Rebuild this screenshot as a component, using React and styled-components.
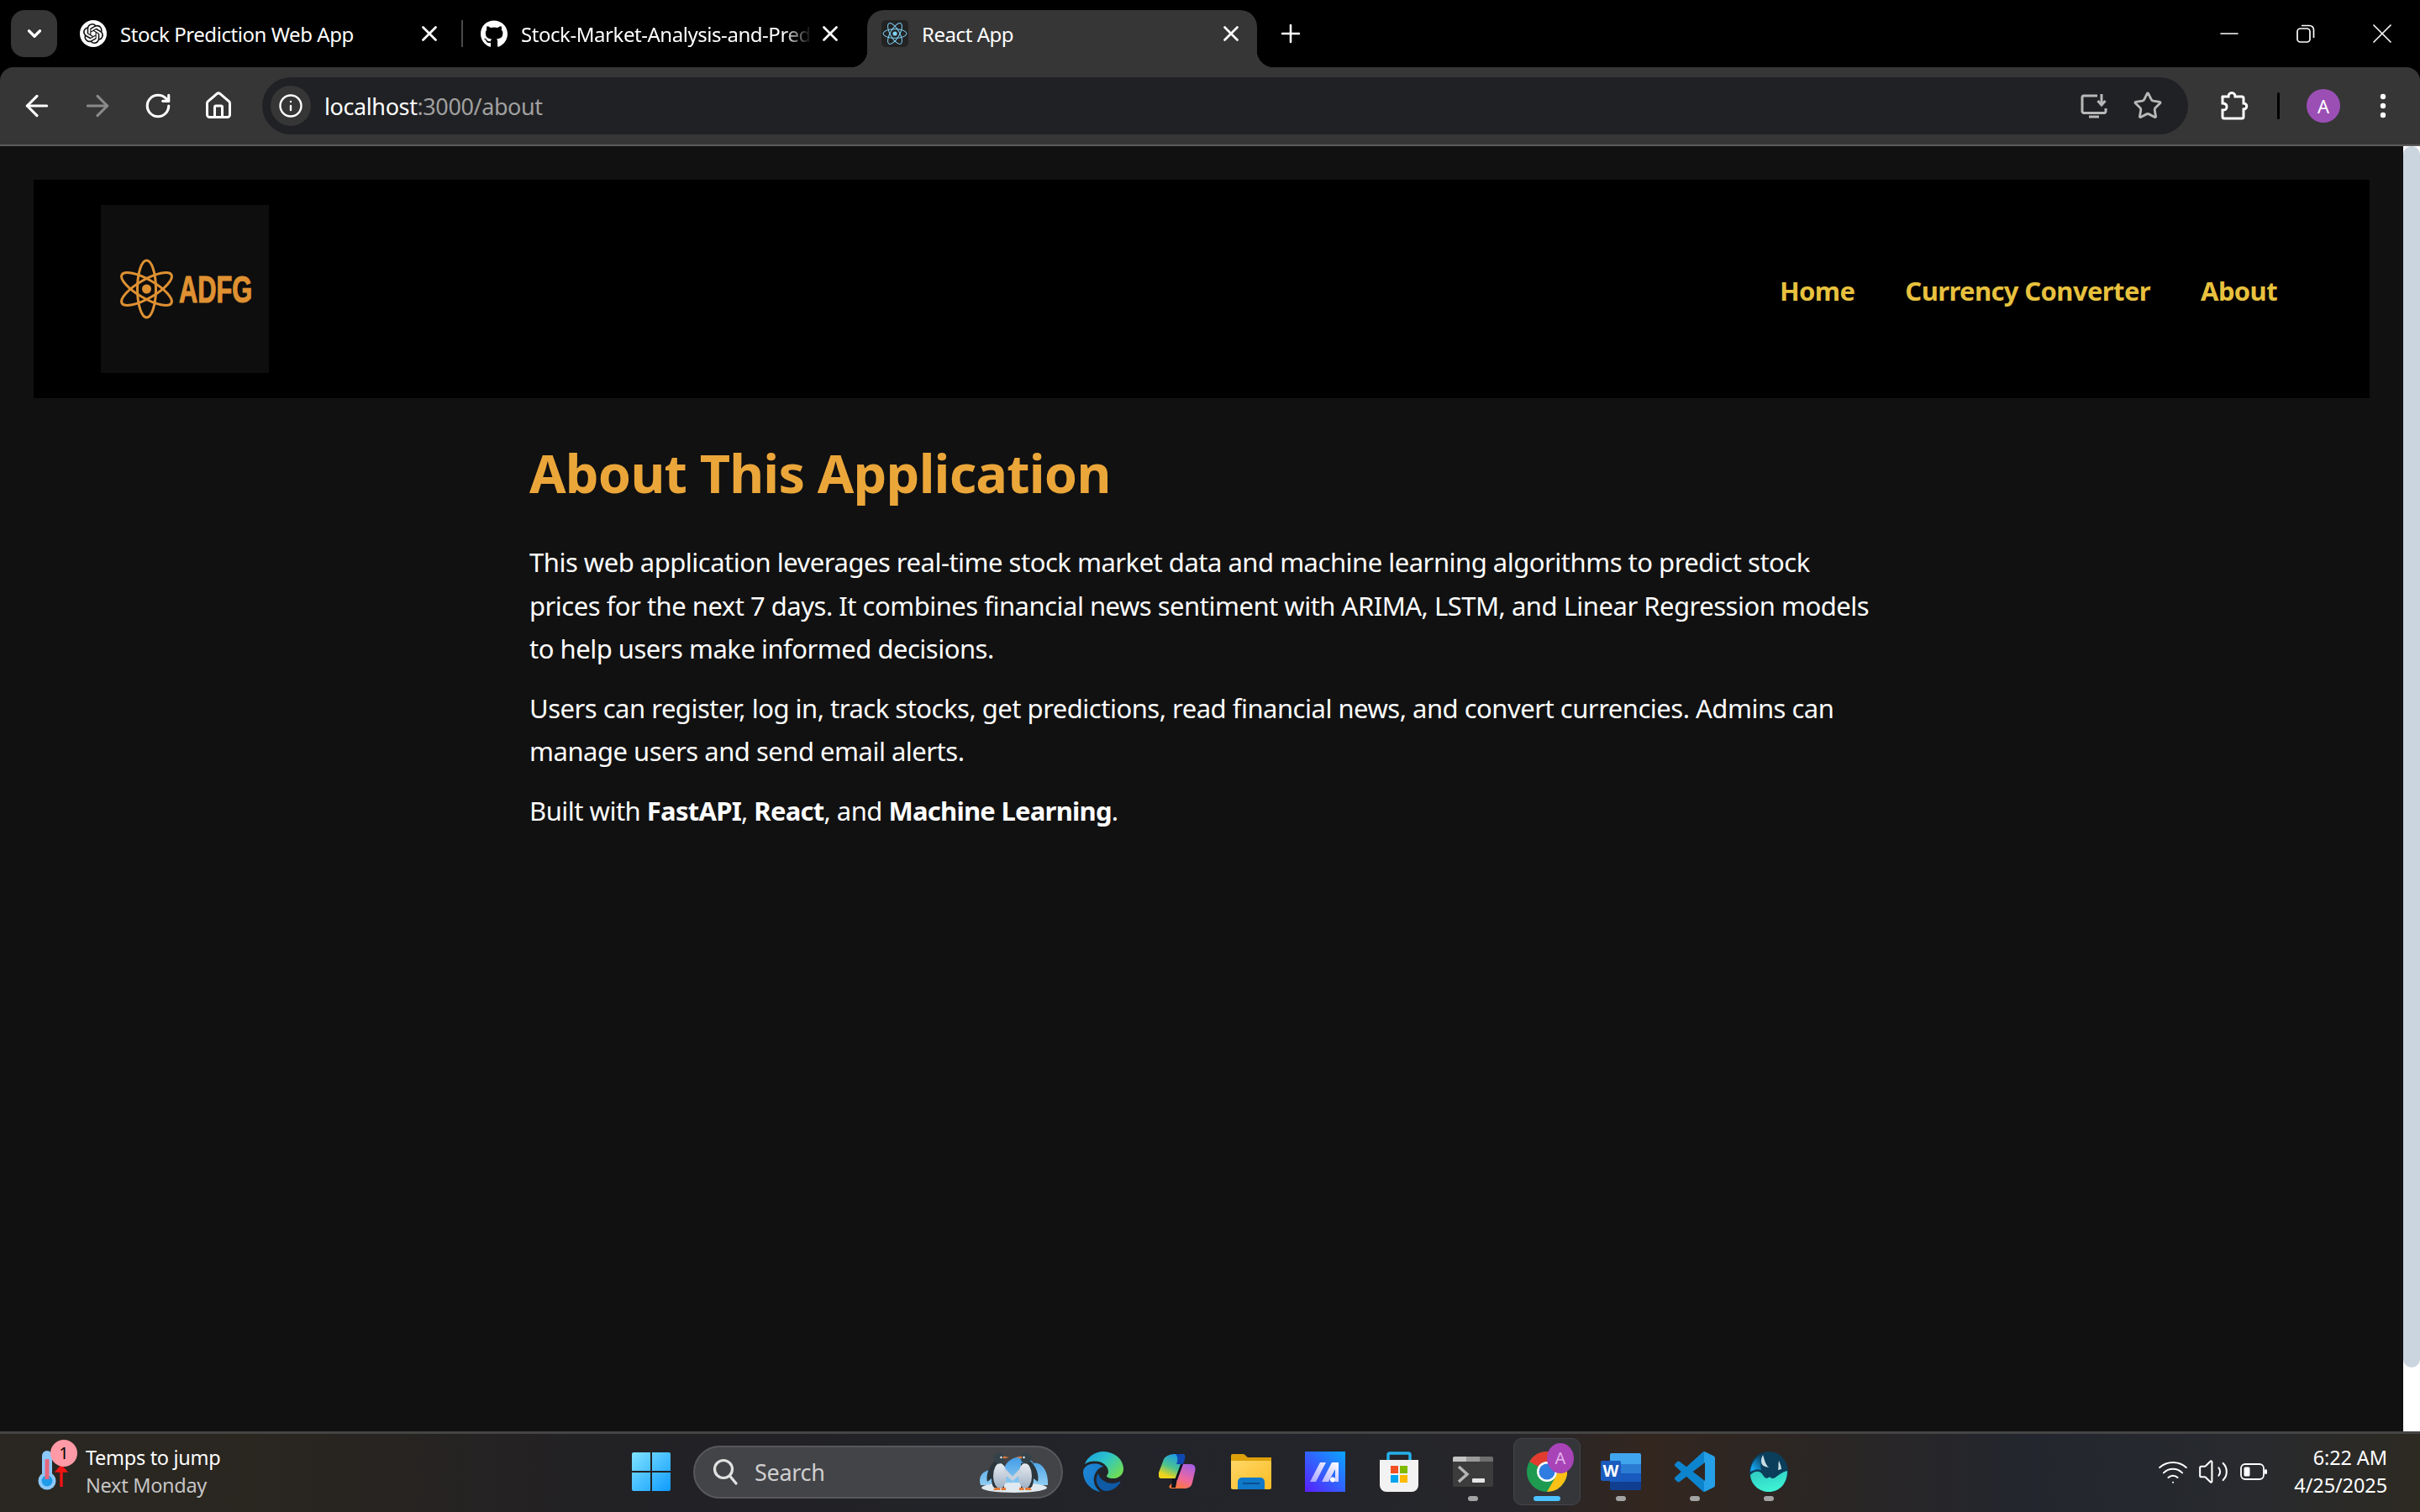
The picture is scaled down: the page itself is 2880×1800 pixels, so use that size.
import React from 'react';
import styled, { createGlobalStyle } from 'styled-components';
import {
  ArrowLeft,
  ArrowRight,
  ChevronDown,
  House,
  Info,
  Minus,
  Plus,
  RotateCw,
  Star,
  Volume2,
  Wifi,
  X,
} from 'lucide-react';
import { FaGithub } from 'react-icons/fa';
import { SiOpenai } from 'react-icons/si';

const uiFont = '"Noto Sans", "Open Sans", sans-serif';

const GlobalStyle = createGlobalStyle`
  html, body {
    margin: 0;
    width: 2880px;
    height: 1800px;
    overflow: hidden;
    background: #000;
  }
  * { box-sizing: border-box; }
`;

const Screen = styled.div`
  width: 2880px;
  height: 1800px;
  display: flex;
  flex-direction: column;
  font-family: ${uiFont};
  color: #fff;
`;

/* ---- tab strip ---- */

const TabStrip = styled.div`
  height: 80px;
  flex: none;
  display: flex;
  align-items: flex-start;
  padding: 12px 0 0 13px;
  background: #000;
`;

const TabListButton = styled.div`
  width: 55px;
  height: 56px;
  border-radius: 16px;
  background: #363636;
  display: flex;
  align-items: center;
  justify-content: center;
`;

const Tabs = styled.div`
  display: flex;
  gap: 13px;
  margin-left: 10px;
`;

const Tab = styled.div`
  position: relative;
  width: 464px;
  height: 68px;
  display: flex;
  align-items: flex-start;
  padding: 12px 15px 0 17px;
  border-radius: 20px 20px 0 0;
  background: ${(p) => (p.$active ? '#363636' : 'transparent')};

  ${(p) =>
    p.$active &&
    `
    &::before, &::after {
      content: '';
      position: absolute;
      bottom: 0;
      width: 20px;
      height: 20px;
    }
    &::before {
      left: -20px;
      background: radial-gradient(circle at 0 0, transparent 20px, #363636 20.5px);
    }
    &::after {
      right: -20px;
      background: radial-gradient(circle at 100% 0, transparent 20px, #363636 20.5px);
    }
  `}

  ${(p) =>
    p.$separator &&
    `
    &::after {
      content: '';
      position: absolute;
      right: -9px;
      top: 12px;
      width: 2px;
      height: 32px;
      background: #4a4a4a;
    }
  `}
`;

const Favicon = styled.div`
  width: 32px;
  height: 32px;
  flex: none;
  display: flex;
  align-items: center;
  justify-content: center;
  border-radius: ${(p) => (p.$round ? '50%' : '5px')};
  background: ${(p) => p.$bg || 'transparent'};
  color: ${(p) => p.$color || '#fff'};
`;

const TabTitle = styled.span`
  flex: 1;
  min-width: 0;
  margin-left: 16px;
  font-size: 24px;
  line-height: 33px;
  letter-spacing: -0.45px;
  white-space: nowrap;
  overflow: hidden;
  -webkit-mask-image: ${(p) =>
    p.$fade ? 'linear-gradient(90deg, #000 90%, transparent 100%)' : 'none'};
`;

const TabClose = styled.div`
  flex: none;
  width: 32px;
  height: 32px;
  margin-left: 6px;
  display: flex;
  align-items: center;
  justify-content: center;
`;

const NewTab = styled.div`
  width: 40px;
  height: 56px;
  margin-left: 20px;
  display: flex;
  align-items: center;
  justify-content: center;
`;

const WindowControls = styled.div`
  display: flex;
  margin: -12px 0 0 auto;
`;

const WindowButton = styled.div`
  width: 91px;
  height: 80px;
  display: flex;
  align-items: center;
  justify-content: center;
`;

/* ---- toolbar ---- */

const Toolbar = styled.div`
  height: 94px;
  flex: none;
  display: flex;
  align-items: center;
  padding-left: 8px;
  border-radius: 16px 16px 0 0;
  border-bottom: 2px solid #5c5c5c;
  background: #363636;
`;

const NavButton = styled.div`
  width: 72px;
  height: 68px;
  flex: none;
  display: flex;
  align-items: center;
  justify-content: center;
  color: ${(p) => (p.$dim ? '#8a8a8a' : '#fff')};
`;

const Omnibox = styled.div`
  flex: 1;
  height: 68px;
  margin-left: 16px;
  display: flex;
  align-items: center;
  padding: 0 30px 0 10px;
  border-radius: 34px;
  background: #202124;
`;

const InfoChip = styled.div`
  width: 48px;
  height: 48px;
  flex: none;
  display: flex;
  align-items: center;
  justify-content: center;
  border-radius: 50%;
  background: #363636;
`;

const Url = styled.div`
  flex: 1;
  margin-left: 16px;
  font-size: 27px;
  letter-spacing: -0.4px;
  color: #a0a0a0;

  b {
    font-weight: 400;
    color: #fff;
  }
`;

const OmniIcons = styled.div`
  display: flex;
  align-items: center;
  gap: 30px;
  color: #b8b8b8;
`;

const ToolRight = styled.div`
  width: 276px;
  flex: none;
  display: flex;
  align-items: center;
  padding-left: 38px;
`;

const ToolDivider = styled.div`
  width: 3px;
  height: 32px;
  margin: 0 32px 0 34px;
  border-radius: 2px;
  background: #000;
`;

const Avatar = styled.div`
  width: 40px;
  height: 40px;
  margin-right: 43px;
  border-radius: 50%;
  background: #9b4fb5;
  font-size: 22px;
  line-height: 40px;
  text-align: center;
`;

/* ---- page ---- */

const Viewport = styled.div`
  flex: 1;
  min-height: 0;
  display: flex;
`;

const Page = styled.main`
  flex: 1;
  padding: 40px 40px 0;
  background: #111;
`;

const Navbar = styled.nav`
  height: 260px;
  display: flex;
  align-items: center;
  justify-content: space-between;
  padding: 0 110px 0 80px;
  background: #000;
`;

const LogoBox = styled.div`
  width: 200px;
  height: 200px;
  background: #0e0e0e;
`;

const NavLinks = styled.div`
  display: flex;
  gap: 60px;
  margin-top: 4px;
`;

const NavLink = styled.a`
  font-size: 31px;
  font-weight: 700;
  letter-spacing: -0.62px;
  color: #e8c13e;
`;

const Article = styled.article`
  width: 1600px;
  margin: 0 auto;
  padding-top: 47px;
`;

const Heading = styled.h1`
  margin: 0 0 39px;
  font-size: 63px;
  line-height: 84px;
  font-weight: 700;
  letter-spacing: -0.8px;
  color: #eba63a;
`;

const Paragraph = styled.p`
  margin: 0 0 19px;
  font-size: 31px;
  line-height: 51.5px;
  letter-spacing: -0.5px;
  color: #fff;

  strong {
    font-weight: 700;
    letter-spacing: -0.75px;
  }
`;

const Scrollbar = styled.div`
  width: 20px;
  flex: none;
  background: #fff;
`;

const ScrollThumb = styled.div`
  height: 1454px;
  border-radius: 10px;
  background: #cbd5e0;
`;

/* ---- taskbar ---- */

const Taskbar = styled.footer`
  height: 96px;
  flex: none;
  display: flex;
  align-items: center;
  box-shadow: inset 0 3px 0 #454545;
  background: linear-gradient(
    90deg,
    #2a2722 0,
    #2a2620 300px,
    #222124 720px,
    #22242a 1400px,
    #26262a 1800px,
    #33261f 1960px,
    #2b2624 2150px,
    #23262e 2420px,
    #282a2e 2680px,
    #2d2a22 2880px
  );
`;

const Widget = styled.div`
  width: 752px;
  flex: none;
  display: flex;
  align-items: center;
  padding-left: 44px;
`;

const WeatherIcon = styled.div`
  position: relative;
  width: 58px;
  height: 50px;
  flex: none;
`;

const WeatherBadge = styled.span`
  position: absolute;
  left: 16px;
  top: -13px;
  width: 32px;
  height: 32px;
  border-radius: 50%;
  background: #ff9aa6;
  color: #000;
  font-size: 20px;
  line-height: 32px;
  text-align: center;
`;

const WidgetText = styled.div`
  font-size: 23.5px;
  line-height: 33px;
  letter-spacing: -0.3px;
`;

const Muted = styled.div`
  color: #c4c4c4;
`;

const SearchBox = styled.div`
  width: 440px;
  height: 63px;
  margin-left: 27px;
  display: flex;
  align-items: center;
  padding: 0 13px 0 21px;
  border: 2px solid #57585b;
  border-radius: 32px;
  background: #434448;
`;

const SearchLabel = styled.span`
  flex: 1;
  margin-left: 20px;
  font-size: 27px;
  letter-spacing: -0.3px;
  color: #cfcfcf;
`;

const Dock = styled.div`
  display: flex;
  margin-left: 4px;
`;

const DockCell = styled.div`
  position: relative;
  width: 88px;
  height: 80px;
  display: flex;
  align-items: center;
  justify-content: center;

  ${(p) =>
    p.$active &&
    `
    &::before {
      content: '';
      position: absolute;
      left: 4px;
      right: 4px;
      top: 0;
      bottom: 0;
      border-radius: 10px;
      border: 1px solid #44464b;
      background: #35363a;
    }
  `}

  > svg {
    position: relative;
  }
`;

const RunningDot = styled.span`
  position: absolute;
  left: 50%;
  bottom: 5px;
  width: ${(p) => (p.$active ? '32px' : '12px')};
  height: 6px;
  border-radius: 3px;
  transform: translateX(-50%);
  background: ${(p) => (p.$active ? '#4cc2ff' : '#a3a3a3')};
`;

const ChromeBadge = styled.span`
  position: absolute;
  left: 44px;
  top: 6px;
  width: 32px;
  height: 36px;
  border-radius: 50%;
  background: #a943b8;
  color: #e3b3ea;
  font-size: 20px;
  line-height: 36px;
  text-align: center;
`;

const Tray = styled.div`
  display: flex;
  align-items: center;
  gap: 10px;
  margin-left: auto;
`;

const Clock = styled.div`
  margin: 0 39px 0 19px;
  font-size: 23.5px;
  line-height: 33px;
  letter-spacing: -0.1px;
  text-align: right;
`;

/* ---- drawn icons ---- */

const RestoreIcon = () => (
  <svg width="24" height="24" viewBox="0 0 24 24" fill="none" stroke="#fff" strokeWidth="1.7">
    <rect x="2" y="6" width="15" height="16" rx="3.5" />
    <path d="M7 2.5h9.5a5 5 0 0 1 5 5V17" />
  </svg>
);

const InstallIcon = () => (
  <svg width="32" height="30" viewBox="0 0 32 30" fill="none" stroke="currentColor" strokeWidth="3">
    <path d="M20 3H3.5a2 2 0 0 0-1.5 2v17a2 2 0 0 0 1.5 1.5h25A2 2 0 0 0 30 22v-4" />
    <path d="M10 28h12" />
    <path d="M25 1v12M20.5 9l4.5 5 4.5-5" />
  </svg>
);

const PuzzleIcon = () => (
  <svg width="34" height="34" viewBox="0 0 34 34" fill="none" stroke="#fff" strokeWidth="3">
    <path d="M3 6h7c0-6 8-6 8 0h8a2 2 0 0 1 2 2v6c5 0 5 7 0 7v9a2 2 0 0 1-2 2H5a2 2 0 0 1-2-2v-8c4 0 5-1 5-4s-2-4-5-4V8a2 2 0 0 1 0-2z" />
  </svg>
);

const MoreIcon = () => (
  <svg width="16" height="30" viewBox="0 0 16 30" fill="#fff">
    <circle cx="8" cy="4" r="3.2" />
    <circle cx="8" cy="15" r="3.2" />
    <circle cx="8" cy="26" r="3.2" />
  </svg>
);

const ReactIcon = () => (
  <svg width="30" height="30" viewBox="0 0 30 30" fill="none" stroke="#7fd3f7" strokeWidth="1">
    <circle cx="15" cy="15" r="2.6" fill="#7fd3f7" stroke="none" />
    <ellipse cx="15" cy="15" rx="14" ry="5.4" />
    <ellipse cx="15" cy="15" rx="14" ry="5.4" transform="rotate(60 15 15)" />
    <ellipse cx="15" cy="15" rx="14" ry="5.4" transform="rotate(120 15 15)" />
  </svg>
);

const LogoMark = () => (
  <svg width="200" height="200" viewBox="0 0 200 200" fill="none" stroke="#df9132" strokeWidth="3">
    <ellipse cx="54.5" cy="100" rx="11" ry="34" />
    <ellipse cx="54.5" cy="100" rx="11" ry="34" transform="rotate(60 54.5 100)" />
    <ellipse cx="54.5" cy="100" rx="11" ry="34" transform="rotate(120 54.5 100)" />
    <circle cx="54.5" cy="100" r="5.5" fill="#df9132" stroke="none" />
    <text
      transform="translate(93 115.500) scale(0.7 1)"
      fill="#df9132"
      strokeWidth="1.2"
      fontFamily="'Liberation Sans', sans-serif"
      fontWeight="700"
      fontSize="44"
    >
      ADFG
    </text>
  </svg>
);

const Thermometer = () => (
  <svg width="40" height="50" viewBox="0 0 40 50">
    <rect x="6" y="0" width="12" height="36" rx="6" fill="#8cc8fa" />
    <circle cx="12" cy="36" r="10.5" fill="#8cc8fa" />
    <circle cx="12" cy="36" r="6.5" fill="#1f9be8" />
    <rect x="9.5" y="10" width="5" height="24" fill="#e8677c" />
    <path d="M29 43V24M24.5 24h9L29 19z" stroke="#f01414" strokeWidth="3.4" fill="#f01414" />
  </svg>
);

const SearchGlass = () => (
  <svg width="30" height="32" viewBox="0 0 30 32" fill="none" stroke="#e2e2e2" strokeWidth="3.2">
    <circle cx="13" cy="13" r="10.5" />
    <path d="M20.5 21l7.5 9" strokeLinecap="round" />
  </svg>
);

const Penguin = ({ x, flip }) => (
  <g transform={`translate(${x} 0) ${flip ? 'scale(-1 1)' : ''}`}>
    <path d="M-6 14C-12 20-16 30-14 38l5-4c0 5 1 9 3 11h12V16z" fill="#2b353c" />
    <ellipse cx="1" cy="31" rx="8" ry="15" fill="url(#penguinBelly)" />
    <circle cx="0" cy="10" r="6.5" fill="#34424a" />
    <circle cx="2.500" cy="9" r="1.300" fill="#dfe6ea" />
    <path d="M5 7.500l7 1.500-7 1.500z" fill="#e07a3a" />
    <path d="M7 22l11 12-2 3-11-9z" fill="#c9d2dc" />
    <path d="M-5 45h6v3h-8zM3 45h5v3h-6z" fill="#e07a3a" />
  </g>
);

const PenguinsDoodle = () => (
  <svg width="86" height="52" viewBox="0 0 86 52">
    <defs>
      <linearGradient id="penguinBelly" x1="0" y1="0" x2="0" y2="1">
        <stop offset="0" stopColor="#e8edf2" />
        <stop offset="1" stopColor="#9fb0c4" />
      </linearGradient>
      <linearGradient id="penguinCloud" x1="0" y1="0" x2="0" y2="1">
        <stop offset="0" stopColor="#3f9be6" />
        <stop offset="1" stopColor="#8fcdf2" />
      </linearGradient>
    </defs>
    <path d="M3 42C-1 30 8 24 16 24c2-8 10-12 16-4 4-12 26-18 34-4 10-2 18 10 17 26z" fill="url(#penguinCloud)" />
    <ellipse cx="43" cy="45" rx="39" ry="6" fill="#dfe9ef" />
    <Penguin x={25} />
    <Penguin x={57} flip />
  </svg>
);

const WindowsLogo = () => (
  <svg width="46" height="46" viewBox="0 0 46 46">
    <defs>
      <linearGradient id="winA" x1="0" y1="0" x2="1" y2="1">
        <stop offset="0" stopColor="#7fe3ff" />
        <stop offset="1" stopColor="#0f9bff" />
      </linearGradient>
    </defs>
    <path fill="url(#winA)" d="M0 2a2 2 0 0 1 2-2h20v22H0zM24 0h20a2 2 0 0 1 2 2v20H24zM0 24h22v22H2a2 2 0 0 1-2-2zM24 24h22v20a2 2 0 0 1-2 2H24z" />
  </svg>
);

const EdgeIcon = () => (
  <svg width="48" height="48" viewBox="0 0 24 24">
    <defs>
      <linearGradient id="edgeTop" x1="0" y1="0" x2="1" y2="0.7">
        <stop offset="0" stopColor="#1b9de2" />
        <stop offset="0.5" stopColor="#2cc4c9" />
        <stop offset="1" stopColor="#6fdc54" />
      </linearGradient>
      <linearGradient id="edgeLeft" x1="0" y1="0" x2="1" y2="1">
        <stop offset="0" stopColor="#1f86d6" />
        <stop offset="1" stopColor="#1276c4" />
      </linearGradient>
    </defs>
    <path fill="url(#edgeTop)" d="M11.96.06q1.7 0 3.33.39 1.63.38 3.07 1.15 1.43.77 2.62 1.93 1.18 1.16 1.98 2.7.49.94.76 1.96.28 1 .28 2.08 0 .89-.23 1.7-.24.8-.69 1.48-.45.68-1.1 1.22-.64.53-1.45.88-.54.24-1.11.36-.58.13-1.16.13-.42 0-.97-.03-.54-.03-1.1-.12-.55-.1-1.05-.28-.5-.19-.84-.5-.12-.09-.23-.24-.1-.16-.1-.33 0-.15.16-.35.16-.2.35-.5.2-.28.36-.68.16-.4.16-.95 0-1.06-.4-1.96-.4-.91-1.06-1.64-.66-.74-1.52-1.28-.86-.55-1.79-.89-.84-.3-1.72-.44-.87-.14-1.76-.14-1.55 0-3.06.45T.94 7.55q.71-1.74 1.81-3.13 1.1-1.38 2.52-2.35Q6.68 1.1 8.37.58q1.7-.52 3.58-.52Z" />
    <path fill="url(#edgeLeft)" d="M6.36 16.59q0 1.1.27 2.15.27 1.06.78 2.03.51.96 1.24 1.77.74.82 1.66 1.4-1.47-.2-2.8-.74-1.33-.55-2.48-1.37-1.15-.83-2.08-1.9-.92-1.07-1.58-2.33T.36 14.94Q0 13.54 0 12.06q0-.81.32-1.49.31-.68.83-1.23.53-.55 1.2-.96.66-.4 1.35-.66.74-.27 1.5-.39.78-.12 1.55-.12.7 0 1.42.1.72.12 1.4.35.68.23 1.32.57.63.35 1.16.83-.35 0-.7.07-.33.07-.65.23v-.02q-.63.28-1.2.74-.57.46-1.05 1.04-.48.58-.87 1.26-.38.67-.65 1.39-.27.71-.42 1.44-.15.72-.15 1.38z" />
    <path fill="#0f5aa6" d="M21.86 17.86q.14 0 .25.12.1.13.1.25t-.11.33l-.32.46-.43.53-.44.5q-.21.25-.38.42l-.22.23q-.58.53-1.34 1.04-.76.51-1.6.91-.86.4-1.74.64t-1.67.24q-.9 0-1.69-.28-.8-.28-1.48-.78-.68-.5-1.22-1.17-.53-.66-.92-1.44-.38-.77-.58-1.6-.2-.83-.2-1.67 0-1 .32-1.96.33-.97.87-1.8.14.95.55 1.77.41.82 1.02 1.5.6.68 1.38 1.21.78.54 1.64.9.86.36 1.77.56.92.2 1.8.2 1.12 0 2.18-.24 1.06-.23 2.06-.72l.2-.1.2-.05z" />
  </svg>
);

const CopilotIcon = () => (
  <svg width="44" height="42" viewBox="0 0 44 42">
    <defs>
      <linearGradient id="copA" x1="0.7" y1="0" x2="0.25" y2="1">
        <stop offset="0" stopColor="#1a9af0" />
        <stop offset="0.5" stopColor="#4cc38e" />
        <stop offset="0.85" stopColor="#eed41c" />
      </linearGradient>
      <linearGradient id="copB" x1="0.7" y1="0" x2="0.25" y2="1">
        <stop offset="0" stopColor="#a95fe0" />
        <stop offset="0.55" stopColor="#ee689e" />
        <stop offset="1" stopColor="#ff7a30" />
      </linearGradient>
    </defs>
    <path fill="url(#copB)" d="M27 12h11c4 0 6 3 5.500 7L40 34c-1 5-5 7-9 7H15c-3 0-3-3-1.500-4L20 30z" />
    <path fill="url(#copA)" d="M13 1c2-1 4-1 7-1h8c3 0 4 3 2 6l-8 24c-1 2-3 0-5-1H3c-3 0-4-4-3-7L6 6c2-3 4-4 7-5z" />
    <path fill="#1047b0" d="M20 0h8c3 0 4 3 3 6l-2 6h-8c2-4 2-9-1-12z" />
    <path fill="#0d1220" d="M26 12h3l-7 19h-3zM16 29h6l-2 11h-5z" />
  </svg>
);

const FolderIcon = () => (
  <svg width="48" height="42" viewBox="0 0 48 42">
    <defs>
      <linearGradient id="folderBody" x1="0" y1="0" x2="1" y2="1">
        <stop offset="0" stopColor="#ffd766" />
        <stop offset="1" stopColor="#fbbc24" />
      </linearGradient>
    </defs>
    <path fill="#dd9f0a" d="M0 2a2 2 0 0 1 2-2h12c3 0 4 3 6 4h28v14H0z" />
    <path fill="url(#folderBody)" d="M0 8h46a2 2 0 0 1 2 2v30a2 2 0 0 1-2 2H2a2 2 0 0 1-2-2z" />
    <path fill="#0f78c9" d="M8 42V33a5 5 0 0 1 5-5h22a5 5 0 0 1 5 5v9z" />
    <rect x="14" y="34" width="20" height="2" fill="#0a4f8f" />
  </svg>
);

const ManusIcon = () => (
  <svg width="48" height="48" viewBox="0 0 48 48">
    <defs>
      <linearGradient id="mBg" x1="0" y1="1" x2="1" y2="0">
        <stop offset="0" stopColor="#5a1eff" />
        <stop offset="1" stopColor="#0aa6ff" />
      </linearGradient>
      <linearGradient id="mFg" x1="0" y1="1" x2="1" y2="0">
        <stop offset="0" stopColor="#a9a4ff" />
        <stop offset="1" stopColor="#ffffff" />
      </linearGradient>
    </defs>
    <rect width="48" height="48" fill="url(#mBg)" />
    <path fill="url(#mFg)" d="M6 36l12-23h7L13 36zM20 36l12-23h8v23h-4V21l-8 15z" />
    <circle cx="33" cy="33.500" r="3" fill="#fff" />
  </svg>
);

const StoreIcon = () => (
  <svg width="46" height="48" viewBox="0 0 46 48">
    <path d="M10 11V4a2 2 0 0 1 2-2h22a2 2 0 0 1 2 2v7" fill="none" stroke="#25b0ea" strokeWidth="3.500" />
    <path fill="#f2f2f2" d="M0 10h46v30a8 8 0 0 1-8 8H8a8 8 0 0 1-8-8z" />
    <rect x="13" y="17" width="9" height="9" fill="#f25022" />
    <rect x="24" y="17" width="9" height="9" fill="#7fba00" />
    <rect x="13" y="28" width="9" height="9" fill="#00a4ef" />
    <rect x="24" y="28" width="9" height="9" fill="#ffb900" />
  </svg>
);

const TerminalIcon = () => (
  <svg width="48" height="36" viewBox="0 0 48 36">
    <rect width="48" height="36" rx="2" fill="#3c3c3c" />
    <path d="M2 0h14v6H0V2a2 2 0 0 1 2-2z" fill="#c4c4c4" />
    <rect x="16" y="0" width="16" height="6" fill="#9a9a9a" />
    <path d="M32 0h14a2 2 0 0 1 2 2v4H32z" fill="#6e6e6e" />
    <path d="M7 12l10 9-10 9" fill="none" stroke="#b5b5b5" strokeWidth="3.500" />
    <rect x="23" y="26" width="15" height="5" rx="1" fill="#e6e6e6" />
  </svg>
);

const ChromeIcon = () => (
  <svg width="48" height="48" viewBox="0 0 48 48">
    <circle cx="24" cy="24" r="24" fill="#1e9b50" />
    <path d="M24 0a24 24 0 0 1 20.800 12H24a12 12 0 0 0-10.400 6L3.200 12A24 24 0 0 1 24 0z" fill="#e33b2e" />
    <path d="M44.800 12A24 24 0 0 1 24 48l10.400-18A12 12 0 0 0 34.400 18z" fill="#fbc116" />
    <circle cx="24" cy="24" r="12" fill="#fff" />
    <circle cx="24" cy="24" r="9.500" fill="#2f7de1" />
  </svg>
);

const WordIcon = () => (
  <svg width="48" height="44" viewBox="0 0 48 44">
    <path fill="#41a5ee" d="M11 2a2 2 0 0 1 2-2h33a2 2 0 0 1 2 2v11H11z" />
    <rect x="11" y="13" width="37" height="11" fill="#2b7cd3" />
    <rect x="11" y="24" width="37" height="10" fill="#185abd" />
    <path fill="#103f91" d="M11 34h37v8a2 2 0 0 1-2 2H13a2 2 0 0 1-2-2z" />
    <rect y="9" width="24" height="24" rx="2" fill="#1a5bbf" />
    <text x="12" y="28" textAnchor="middle" fontFamily="'Liberation Sans', sans-serif" fontWeight="700" fontSize="20" fill="#fff">
      W
    </text>
  </svg>
);

const VsCodeIcon = () => (
  <svg width="48" height="48" viewBox="0 0 24 24">
    <defs>
      <linearGradient id="vsBlue" x1="0" y1="0" x2="1" y2="0">
        <stop offset="0.72" stopColor="#0d84ce" />
        <stop offset="0.72" stopColor="#259fe6" />
      </linearGradient>
    </defs>
    <path fill="url(#vsBlue)" d="M23.15 2.587L18.21.21a1.494 1.494 0 0 0-1.705.29l-9.46 8.63-4.12-3.128a.999.999 0 0 0-1.276.057L.327 7.261A1 1 0 0 0 .326 8.74L3.899 12 .326 15.26a1 1 0 0 0 .001 1.479L1.65 17.94a.999.999 0 0 0 1.276.057l4.12-3.128 9.46 8.63a1.492 1.492 0 0 0 1.704.29l4.942-2.377A1.5 1.5 0 0 0 24 20.06V3.939a1.5 1.5 0 0 0-.85-1.352zm-5.146 14.861L10.826 12l7.178-5.448v10.896z" />
  </svg>
);

const WaveAppIcon = () => (
  <svg width="46" height="48" viewBox="0 0 46 48">
    <defs>
      <linearGradient id="waveSea" x1="0" y1="0" x2="0.4" y2="1">
        <stop offset="0" stopColor="#2fc9c0" />
        <stop offset="1" stopColor="#3df2d4" />
      </linearGradient>
      <linearGradient id="waveSky" x1="0" y1="0.7" x2="0.6" y2="0">
        <stop offset="0" stopColor="#15a6f0" />
        <stop offset="1" stopColor="#0b3e5e" />
      </linearGradient>
    </defs>
    <ellipse cx="23" cy="24" rx="23" ry="24" fill="#0b3e5a" />
    <path d="M1 24C2 12 10 4 18 2c-3 6-6 12-4 20-5-2-9 0-13 2z" fill="url(#waveSky)" />
    <path fill="url(#waveSea)" d="M1 28c6-6 12-5 15 0 2 4 5 5 8 2 1 2 5 3 8 0 4-3 8-6 13-7 0 15-9 25-22 25C12 48 2 40 1 28z" />
    <path fill="#c9dde6" d="M16 4c2 5 2 10 7 15-5-1-9-2-9-8 0-3 1-5 2-7zM34 22c1-4 0-8 1-11 2 4 3 8 3 10z" />
  </svg>
);

const BatteryIcon = () => (
  <svg width="38" height="20" viewBox="-3 0 38 20" fill="none">
    <rect x="1" y="1" width="27" height="18" rx="5" stroke="#fff" strokeWidth="1.800" />
    <rect x="4.500" y="4.500" width="7" height="11" rx="1.500" fill="#fff" />
    <rect x="29" y="7" width="3" height="6" rx="1.500" fill="#fff" />
  </svg>
);

const dockApps = [
  { name: 'edge', icon: <EdgeIcon /> },
  { name: 'copilot', icon: <CopilotIcon /> },
  { name: 'explorer', icon: <FolderIcon /> },
  { name: 'manus', icon: <ManusIcon /> },
  { name: 'store', icon: <StoreIcon /> },
  { name: 'terminal', icon: <TerminalIcon />, running: true },
  { name: 'chrome', icon: <ChromeIcon />, running: true, active: true },
  { name: 'word', icon: <WordIcon />, running: true },
  { name: 'vscode', icon: <VsCodeIcon />, running: true },
  { name: 'wave', icon: <WaveAppIcon />, running: true },
];

const App = () => {
  return (
    <Screen>
      <GlobalStyle />
      <TabStrip>
        <TabListButton>
          <ChevronDown size={26} strokeWidth={3} color="#fff" />
        </TabListButton>
        <Tabs>
          <Tab $separator>
            <Favicon $round $bg="#fff" $color="#111">
              <SiOpenai size={24} />
            </Favicon>
            <TabTitle>Stock Prediction Web App</TabTitle>
            <TabClose>
              <X size={30} strokeWidth={2.2} />
            </TabClose>
          </Tab>
          <Tab>
            <Favicon>
              <FaGithub size={33} />
            </Favicon>
            <TabTitle $fade>Stock-Market-Analysis-and-Prediction</TabTitle>
            <TabClose>
              <X size={30} strokeWidth={2.2} />
            </TabClose>
          </Tab>
          <Tab $active>
            <Favicon $bg="#232323">
              <ReactIcon />
            </Favicon>
            <TabTitle>React App</TabTitle>
            <TabClose>
              <X size={30} strokeWidth={2.2} />
            </TabClose>
          </Tab>
        </Tabs>
        <NewTab>
          <Plus size={34} strokeWidth={1.8} />
        </NewTab>
        <WindowControls>
          <WindowButton>
            <Minus size={34} strokeWidth={1.2} />
          </WindowButton>
          <WindowButton>
            <RestoreIcon />
          </WindowButton>
          <WindowButton>
            <X size={40} strokeWidth={1} />
          </WindowButton>
        </WindowControls>
      </TabStrip>

      <Toolbar>
        <NavButton>
          <ArrowLeft size={40} strokeWidth={1.9} />
        </NavButton>
        <NavButton $dim>
          <ArrowRight size={40} strokeWidth={1.9} />
        </NavButton>
        <NavButton>
          <RotateCw size={34} strokeWidth={2.2} />
        </NavButton>
        <NavButton>
          <House size={36} strokeWidth={2} />
        </NavButton>
        <Omnibox>
          <InfoChip>
            <Info size={30} strokeWidth={1.9} />
          </InfoChip>
          <Url>
            <b>localhost</b>:3000/about
          </Url>
          <OmniIcons>
            <InstallIcon />
            <Star size={36} strokeWidth={1.9} />
          </OmniIcons>
        </Omnibox>
        <ToolRight>
          <PuzzleIcon />
          <ToolDivider />
          <Avatar>A</Avatar>
          <MoreIcon />
        </ToolRight>
      </Toolbar>

      <Viewport>
        <Page>
          <Navbar>
            <LogoBox>
              <LogoMark />
            </LogoBox>
            <NavLinks>
              <NavLink>Home</NavLink>
              <NavLink>Currency Converter</NavLink>
              <NavLink>About</NavLink>
            </NavLinks>
          </Navbar>
          <Article>
            <Heading>About This Application</Heading>
            <Paragraph>
              This web application leverages real-time stock market data and machine learning
              algorithms to predict stock prices for the next 7 days. It combines financial news
              sentiment with ARIMA, LSTM, and Linear Regression models to help users make informed
              decisions.
            </Paragraph>
            <Paragraph>
              Users can register, log in, track stocks, get predictions, read financial news, and
              convert currencies. Admins can manage users and send email alerts.
            </Paragraph>
            <Paragraph>
              Built with <strong>FastAPI</strong>, <strong>React</strong>, and{' '}
              <strong>Machine Learning</strong>.
            </Paragraph>
          </Article>
        </Page>
        <Scrollbar>
          <ScrollThumb />
        </Scrollbar>
      </Viewport>

      <Taskbar>
        <Widget>
          <WeatherIcon>
            <Thermometer />
            <WeatherBadge>1</WeatherBadge>
          </WeatherIcon>
          <WidgetText>
            <div>Temps to jump</div>
            <Muted>Next Monday</Muted>
          </WidgetText>
        </Widget>
        <WindowsLogo />
        <SearchBox>
          <SearchGlass />
          <SearchLabel>Search</SearchLabel>
          <PenguinsDoodle />
        </SearchBox>
        <Dock>
          {dockApps.map((app) => (
            <DockCell key={app.name} $active={app.active}>
              {app.icon}
              {app.active && <ChromeBadge>A</ChromeBadge>}
              {app.running && <RunningDot $active={app.active} />}
            </DockCell>
          ))}
        </Dock>
        <Tray>
          <Wifi size={38} strokeWidth={1.3} />
          <Volume2 size={38} strokeWidth={1.3} />
          <BatteryIcon />
          <Clock>
            <div>6:22 AM</div>
            <div>4/25/2025</div>
          </Clock>
        </Tray>
      </Taskbar>
    </Screen>
  );
};

export default App;
